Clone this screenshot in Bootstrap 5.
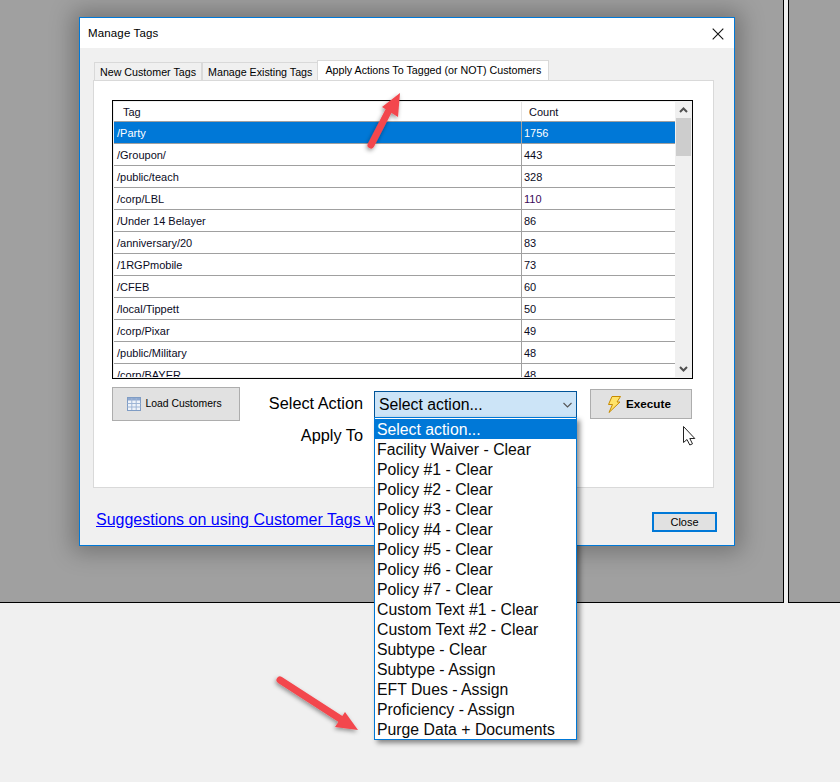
<!DOCTYPE html>
<html lang="en">
<head>
<meta charset="utf-8">
<title>Manage Tags</title>
<link href="https://cdn.jsdelivr.net/npm/bootstrap@5.3.0/dist/css/bootstrap.min.css" rel="stylesheet">
<style>
html,body{margin:0;background:#f0f0f0;}
body{font-family:"Liberation Sans",Arial,sans-serif;color:#000;}
.stage{width:840px;height:782px;overflow:hidden;background:#f0f0f0;}
.desk{height:603px;gap:4px;}
.pane-a{width:784px;background:#a0a0a0;border-right:1px solid #000;border-bottom:1px solid #000;}
.pane-b{flex:1 1 auto;background:#a0a0a0;border-left:1px solid #000;border-bottom:1px solid #000;}
.win{left:79px;top:17px;width:656px;height:529px;background:#f0f0f0;border:1px solid #0078d7;box-shadow:0 0 22px 6px rgba(0,0,0,.28);}
.win-title{height:30px;background:#fff;padding:1px 0 0 8px;font-size:11.5px;letter-spacing:.15px;}
.win-x{width:12px;height:12px;margin-right:10px;}
.win-body{padding:12px 20px 0 13px;}
.tabstrip{height:20px;margin:0;padding-left:1px;border:0;font-size:10.7px;align-items:flex-end;}
.tabitem{height:18px;background:#f0f0f0;border:1px solid #d9d9d9;border-bottom:0;padding:0 5px;line-height:18px;white-space:nowrap;}
.tabitem.on{height:20px;background:#fff;padding:0 7px;line-height:19px;margin-left:-1px;}
.tabpanel{height:408px;width:621px;background:#fff;border:1px solid #d9d9d9;padding:19px 18px 0;}
.grid-wrap{width:581px;height:279px;border:1px solid #000;background:#f0f0f0;padding:1px 0 1px 1px;}
.grid-clip{width:561px;height:100%;overflow:hidden;background:#fff;}
.tag-grid{table-layout:fixed;width:561px;margin:0;font-size:11px;border-collapse:separate;border-spacing:0;--bs-table-bg:transparent;}
.tag-grid th,.tag-grid td{padding:2px 0 0 3px;border:0;font-weight:400;white-space:nowrap;vertical-align:middle;color:#0b0b1e;box-shadow:none;}
.tag-grid th{height:20px;padding-left:9px;border-bottom:1px solid #a0a0a0;background:#fff;}
.tag-grid th+th{border-left:1px solid #e3e3e3;padding-left:7px;}
.tag-grid td{height:22px;border-bottom:1px solid #a0a0a0;background:#fff;}
.tag-grid td+td{border-left:1px solid #a0a0a0;padding-left:2px;}
.tag-grid tr.sel td{background:#0078d7;color:#fff;}
.tag-grid td.pur{color:#3a0a5a;}
.sbar{width:17px;height:100%;background:#f0f0f0;}
.sbar-btn{height:16px;}
.sbar-thumb{height:38px;background:#cdcdcd;margin:0 1px;}
.ctlrow{margin-top:8px;height:34px;}
.winbtn{background:#e1e1e1;border:1px solid #adadad;border-radius:0;color:#000;padding:0;font-size:10.4px;}
.winbtn:hover{background:#e1e1e1;border-color:#adadad;color:#000;}
.btn-load{width:128px;height:34px;padding-right:3px;}
.btn-exec{width:102px;height:30px;font-weight:700;font-size:11.7px;margin-top:2px;gap:5px;padding-right:3px;}
.lbl{font-size:16.3px;line-height:18px;text-align:right;width:123px;}
.lbl-a{margin-top:7px;}
.cmb{width:203px;height:27px;margin:4px 13px 0 11px;background:#cce4f7;border:1px solid #005499;font-size:15.8px;padding:1px 4px 0 4px;}
.lbl-b{margin-top:14px;}
.win-foot{padding:0 0 0 3px;}
.win-link{font-size:16px;line-height:24px;color:#00f;text-decoration:underline;margin-top:20px;}
.win-link:hover{color:#00f;}
.btn-close-win{width:65px;height:20px;border:2px solid #0078d7;font-size:11px;line-height:16px;margin:24px -3px 0 0;}
.btn-close-win:hover{border-color:#0078d7;}
.drop{left:374px;top:417px;width:203px;height:323px;background:#fff;border:1px solid #0078d7;padding-top:1px;box-shadow:3px 3px 5px rgba(0,0,0,.45);font-size:15.8px;}
.drop-row{height:20px;line-height:22px;padding-left:2px;white-space:nowrap;color:#0a0a0a;}
.drop-row.on{background:#0078d7;color:#fff;}
.overlay-svg{left:0;top:0;pointer-events:none;}
</style>
</head>
<body>
<div class="stage position-relative">
  <div class="desk d-flex"><div class="pane-a"></div><div class="pane-b"></div></div>

  <div class="win position-absolute d-flex flex-column">
    <div class="win-title d-flex align-items-center justify-content-between">
      <span>Manage Tags</span>
      <svg class="win-x" viewBox="0 0 12 12" fill="none" stroke="#111" stroke-width="1.1"><path d="M.7.7l10.6 10.6M11.3.7L.7 11.3"/></svg>
    </div>
    <div class="win-body flex-grow-1 d-flex flex-column">
      <ul class="nav tabstrip">
        <li class="tabitem">New Customer Tags</li>
        <li class="tabitem">Manage Existing Tags</li>
        <li class="tabitem on">Apply Actions To Tagged (or NOT) Customers</li>
      </ul>
      <div class="tabpanel">
        <div class="grid-wrap d-flex">
          <div class="grid-clip">
            <table class="table tag-grid">
              <colgroup><col style="width:407px"><col></colgroup>
              <thead><tr><th>Tag</th><th>Count</th></tr></thead>
              <tbody>
                <tr class="sel"><td>/Party</td><td>1756</td></tr>
                <tr><td>/Groupon/</td><td>443</td></tr>
                <tr><td>/public/teach</td><td>328</td></tr>
                <tr><td>/corp/LBL</td><td class="pur">110</td></tr>
                <tr><td>/Under 14 Belayer</td><td>86</td></tr>
                <tr><td>/anniversary/20</td><td>83</td></tr>
                <tr><td>/1RGPmobile</td><td>73</td></tr>
                <tr><td>/CFEB</td><td>60</td></tr>
                <tr><td>/local/Tippett</td><td>50</td></tr>
                <tr><td>/corp/Pixar</td><td>49</td></tr>
                <tr><td>/public/Military</td><td>48</td></tr>
                <tr><td>/corp/BAYER</td><td>48</td></tr>
              </tbody>
            </table>
          </div>
          <div class="sbar d-flex flex-column">
            <div class="sbar-btn d-flex align-items-center justify-content-center">
              <svg width="9" height="6" viewBox="0 0 9 6" fill="none" stroke="#505050" stroke-width="2"><path d="M1 5l3.500-3.500L8 5"/></svg>
            </div>
            <div class="sbar-thumb"></div>
            <div class="flex-grow-1"></div>
            <div class="sbar-btn d-flex align-items-center justify-content-center">
              <svg width="9" height="6" viewBox="0 0 9 6" fill="none" stroke="#505050" stroke-width="2"><path d="M1 1l3.500 3.500L8 1"/></svg>
            </div>
          </div>
        </div>
        <div class="ctlrow d-flex align-items-start">
          <button type="button" class="btn winbtn btn-load d-flex align-items-center justify-content-center gap-1">
            <svg width="14" height="14" viewBox="0 0 14 14"><rect x=".5" y=".5" width="13" height="13" fill="#eef3fa" stroke="#7f9cc4"/><rect x="1" y="1" width="12" height="2.500" fill="#8fa9d0"/><path d="M.5 6.500h13M.5 10h13M4.800 1v12M9.200 1v12" stroke="#9fb6d6" fill="none"/></svg>
            <span>Load Customers</span>
          </button>
          <div>
            <div class="lbl lbl-a">Select Action</div>
            <div class="lbl lbl-b">Apply To</div>
          </div>
          <div class="cmb d-flex align-items-center justify-content-between">
            <span>Select action...</span>
            <svg width="9" height="6" viewBox="0 0 9 6" fill="none" stroke="#555" stroke-width="1.100"><path d="M.5 1l4 4 4-4"/></svg>
          </div>
          <button type="button" class="btn winbtn btn-exec d-flex align-items-center justify-content-center">
            <svg width="13" height="17" viewBox="0 0 13 17"><path d="M4 .5h8.500L9 6h3L1 16.500 4.500 8.500H.5z" fill="#ffe36a" stroke="#c68a00" stroke-width="1"/></svg>
            <span>Execute</span>
          </button>
        </div>
      </div>
      <div class="win-foot d-flex align-items-start justify-content-between">
        <a class="win-link" href="#">Suggestions on using Customer Tags w</a>
        <button type="button" class="btn winbtn btn-close-win">Close</button>
      </div>
    </div>
  </div>

  <div class="drop position-absolute">
    <div class="drop-row on">Select action...</div>
    <div class="drop-row">Facility Waiver - Clear</div>
    <div class="drop-row">Policy #1 - Clear</div>
    <div class="drop-row">Policy #2 - Clear</div>
    <div class="drop-row">Policy #3 - Clear</div>
    <div class="drop-row">Policy #4 - Clear</div>
    <div class="drop-row">Policy #5 - Clear</div>
    <div class="drop-row">Policy #6 - Clear</div>
    <div class="drop-row">Policy #7 - Clear</div>
    <div class="drop-row">Custom Text #1 - Clear</div>
    <div class="drop-row">Custom Text #2 - Clear</div>
    <div class="drop-row">Subtype - Clear</div>
    <div class="drop-row">Subtype - Assign</div>
    <div class="drop-row">EFT Dues - Assign</div>
    <div class="drop-row">Proficiency - Assign</div>
    <div class="drop-row">Purge Data + Documents</div>
  </div>

  <svg class="overlay-svg position-absolute" width="840" height="782" viewBox="0 0 840 782">
    <defs><filter id="sh" x="-30%" y="-30%" width="160%" height="160%"><feDropShadow dx="-1" dy="2" stdDeviation="2" flood-color="#000" flood-opacity=".4"/></filter></defs>
    <g filter="url(#sh)" fill="#f3474d" stroke="none">
      <path d="M371 145L388 112" stroke="#f3474d" stroke-width="7" stroke-linecap="round"/>
      <path d="M400 93L398 117L382 107z"/>
      <path d="M280 680L342 720" stroke="#f3474d" stroke-width="7" stroke-linecap="round"/>
      <path d="M358 730L335 727L345 712z"/>
    </g>
    <path d="M683.500 426.500v16l3.500-3 2.800 5.500 2.700-1.200-2.700-5.300h5z" fill="#fff" stroke="#222" stroke-width="1"/>
  </svg>
</div>
<script src="https://cdn.jsdelivr.net/npm/bootstrap@5.3.0/dist/js/bootstrap.bundle.min.js"></script>
</body>
</html>
